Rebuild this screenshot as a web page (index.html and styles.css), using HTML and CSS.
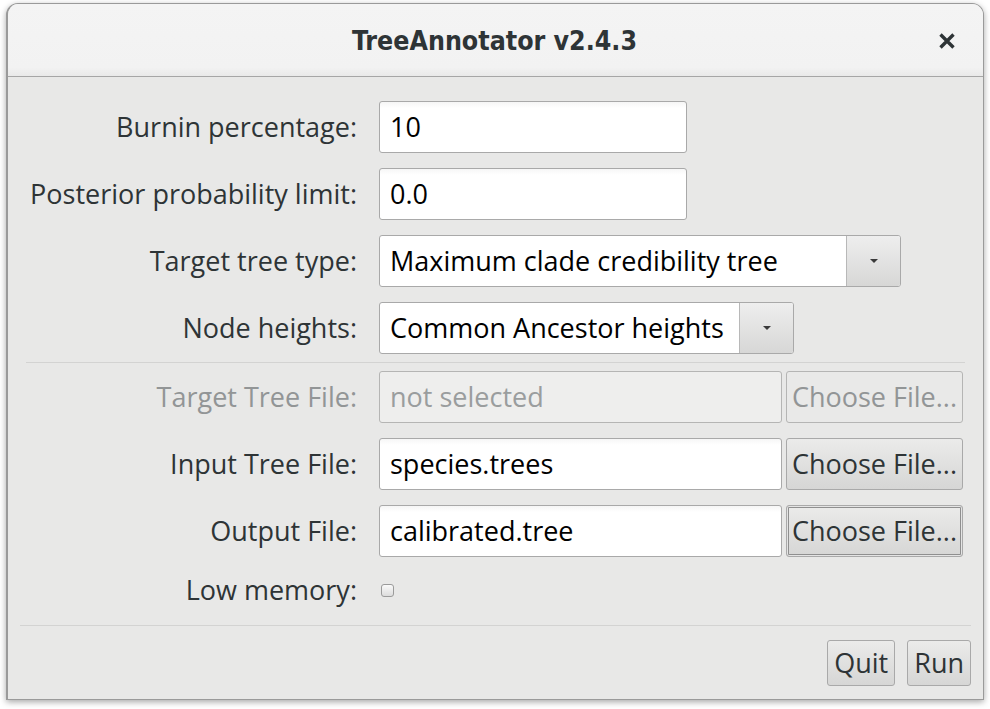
FILE: index.html
```html
<!DOCTYPE html>
<html>
<head>
<meta charset="utf-8">
<link rel="stylesheet" href="styles.css">
</head>
<body>
<div class="window">
  <div class="titlebar">
    <div class="title">TreeAnnotator v2.4.3</div>
    <div class="close">
      <svg width="20" height="20" viewBox="0 0 20 20"><path d="M3.5 3.5 L16.5 16.5 M16.5 3.5 L3.5 16.5" stroke="#2e3436" stroke-width="3.4" stroke-linecap="butt"/></svg>
    </div>
  </div>
  <div class="content">
    <div class="row first">
      <div class="label">Burnin percentage:</div>
      <div class="entry w308">10</div>
    </div>
    <div class="row">
      <div class="label">Posterior probability limit:</div>
      <div class="entry w308">0.0</div>
    </div>
    <div class="row">
      <div class="label">Target tree type:</div>
      <div class="combo w522"><span class="combo-text">Maximum clade credibility tree</span><span class="combo-btn"><span class="arrow"></span></span></div>
    </div>
    <div class="row">
      <div class="label">Node heights:</div>
      <div class="combo w415"><span class="combo-text">Common Ancestor heights</span><span class="combo-btn"><span class="arrow"></span></span></div>
    </div>
    <div class="sep sep1"></div>
    <div class="row row-after-sep">
      <div class="label disabled">Target Tree File:</div>
      <div class="file">
        <div class="entry fentry disabled-entry">not selected</div>
        <div class="btn choose disabled-btn">Choose File...</div>
      </div>
    </div>
    <div class="row">
      <div class="label">Input Tree File:</div>
      <div class="file">
        <div class="entry fentry">species.trees</div>
        <div class="btn choose">Choose File...</div>
      </div>
    </div>
    <div class="row">
      <div class="label">Output File:</div>
      <div class="file">
        <div class="entry fentry">calibrated.tree</div>
        <div class="btn choose focused">Choose File...</div>
      </div>
    </div>
    <div class="row small">
      <div class="label">Low memory:</div>
      <div class="check"></div>
    </div>
    <div class="sep sep2"></div>
    <div class="actions">
      <div class="btn action">Quit</div>
      <div class="btn action">Run</div>
    </div>
  </div>
</div>
</body>
</html>
```
FILE: styles.css
```css
html, body {
  margin: 0;
  padding: 0;
  background: #ffffff;
  width: 990px;
  height: 709px;
  overflow: hidden;
}
body {
  font-family: "Open Sans", "Noto Sans", sans-serif;
  color: #2e3436;
}
.window {
  margin: 3px 0 0 6px;
  width: 978px;
  height: 697px;
  box-sizing: border-box;
  border: 1px solid #9a9a9a;
  border-left-width: 2px;
  border-radius: 12px 12px 0 0;
  background: #e8e8e7;
  box-shadow: 0 2px 6px rgba(0,0,0,0.35);
  display: flex;
  flex-direction: column;
  overflow: hidden;
}
.titlebar {
  height: 72px;
  flex: none;
  background: linear-gradient(#f4f4f4 0, #f2f2f2 88%, #e9e9e9 100%);
  border-bottom: 1px solid #a6a6a6;
  position: relative;
  display: flex;
  align-items: center;
  justify-content: center;
}
.title {
  font-family: "DejaVu Sans Condensed", "DejaVu Sans", sans-serif;
  font-stretch: condensed;
  font-weight: bold;
  font-size: 26.5px;
  color: #2e3436;
  margin-left: -2px;
}
.close {
  position: absolute;
  right: 26px;
  top: 27px;
  width: 20px;
  height: 20px;
}
.content {
  padding: 0;
  display: flex;
  flex-direction: column;
}
.row {
  display: flex;
  align-items: center;
  height: 52px;
  margin-top: 15px;
}
.row.first { margin-top: 24px; }
.row.row-after-sep { margin-top: 8px; }
.row.small { height: 26px; margin-top: 20px; }
.label {
  width: 349px;
  flex: none;
  text-align: right;
  font-size: 27px;
  margin-right: 22px;
  color: #2e3436;
  white-space: nowrap;
  padding-bottom: 1px;
}
.label.disabled { color: #929596; }
.entry {
  height: 52px;
  box-sizing: border-box;
  border: 1px solid #a9a9a9;
  border-radius: 3px;
  background: linear-gradient(#f6f6f6 0, #ffffff 6px, #ffffff 100%);
  font-size: 27px;
  color: #000;
  padding-left: 10px;
  padding-bottom: 1px;
  display: flex;
  align-items: center;
  white-space: nowrap;
}
.w308 { width: 308px; }
.combo {
  height: 52px;
  box-sizing: border-box;
  border: 1px solid #a9a9a9;
  border-radius: 3px;
  background: #ffffff;
  display: flex;
  overflow: hidden;
}
.w522 { width: 522px; }
.w415 { width: 415px; }
.combo-text {
  flex: 1;
  font-size: 27px;
  color: #000;
  padding-left: 10px;
  padding-bottom: 1px;
  display: flex;
  align-items: center;
  white-space: nowrap;
  overflow: hidden;
}
.combo-btn {
  width: 53px;
  flex: none;
  border-left: 1px solid #b8b8b8;
  background: linear-gradient(#eeeeee, #d7d7d6);
  display: flex;
  align-items: center;
  justify-content: center;
}
.arrow {
  width: 0;
  height: 0;
  border-left: 4px solid transparent;
  border-right: 4px solid transparent;
  border-top: 4px solid #3a3a3a;
}
.sep {
  height: 1px;
  background: #d3d3d2;
}
.sep1 { margin: 8px 18px 0 18px; }
.sep2 { margin: 22px 12px 0 12px; }
.file {
  display: flex;
  gap: 4px;
}
.fentry { width: 403px; }
.disabled-entry {
  background: #eeeeed;
  color: #9a9d9e;
  border-color: #b5b5b4;
}
.btn {
  box-sizing: border-box;
  border: 1px solid #a9a9a9;
  border-radius: 3px;
  background: linear-gradient(#ebebea, #d6d6d5);
  color: #2e3436;
  font-size: 27px;
  display: flex;
  align-items: center;
  justify-content: center;
  white-space: nowrap;
  padding-bottom: 1px;
}
.choose {
  width: 177px;
  height: 52px;
  overflow: hidden;
}
.disabled-btn {
  background: #e9e9e8;
  color: #929596;
  border-color: #b5b5b4;
}
.focused {
  box-shadow: inset 0 0 0 1px #e4e4e4, inset 0 0 0 2px #8f8f8f;
}
.check {
  width: 13px;
  height: 13px;
  box-sizing: border-box;
  margin-left: 2px;
  border: 1px solid #9b9b9b;
  border-radius: 3px;
  background: linear-gradient(#fafafa, #dcdcdc);
}
.actions {
  display: flex;
  justify-content: flex-end;
  gap: 12px;
  margin-top: 14px;
  padding-right: 12px;
}
.action {
  height: 46px;
  padding: 0 6px 1px 6px;
}
```
